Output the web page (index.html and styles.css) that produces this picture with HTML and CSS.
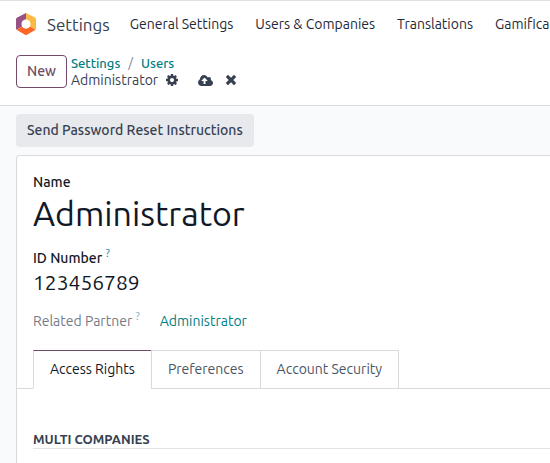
FILE: index.html
```html
<!DOCTYPE html>
<html lang="en">
<head>
<meta charset="utf-8">
<title>Settings - Administrator</title>
<link rel="stylesheet" href="styles.css">
</head>
<body>
<header class="navbar">
  <a class="brand" href="#">
    <svg class="brand-logo" viewBox="0 0 20 22" aria-hidden="true">
      <path fill="#985184" d="M10 0 1.200 4.600Q0 5.300 0 6.500V15.500Q0 16.200.5 16.800L6 13.500V8.700L10 6.500Z"/>
      <path fill="#fbb945" d="M10 0 18.800 4.600Q20 5.300 20 6.500V15.500Q20 16.200 19.500 16.800L14 13.500V8.700L10 6.500Z"/>
      <path fill="#fc6626" d="M.5 16.800 6 13.500 10 15.500 14 13.500 19.500 16.800 11 21.700Q10 22.300 9 21.700Z"/>
      <circle cx="10" cy="11" r="4.500" fill="#fff"/>
    </svg>
    <span class="brand-name">Settings</span>
  </a>
  <nav class="menu">
    <a href="#">General Settings</a>
    <a href="#">Users &amp; Companies</a>
    <a href="#">Translations</a>
    <a href="#">Gamification</a>
  </nav>
</header>
<div class="control-panel">
  <button class="btn btn-new" type="button">New</button>
  <div class="crumbs">
    <div class="crumb-path"><a href="#">Settings</a><span class="slash">/</span><a href="#">Users</a></div>
    <div class="crumb-current">
      <span>Administrator</span>
      <button class="icon-btn" type="button" aria-label="Actions">
        <svg class="icon" viewBox="128 128 1536 1536"><path d="M1152 896q0-106-75-181t-181-75-181 75-75 181 75 181 181 75 181-75 75-181zm512-109v222q0 12-8 23t-20 13l-185 28q-19 54-39 91 35 50 107 138 10 12 10 25t-9 23q-27 37-99 108t-94 71q-12 0-26-9l-138-108q-44 23-91 38-16 136-29 186-7 28-36 28h-222q-14 0-24.500-8.500t-11.500-21.500l-28-184q-49-16-90-37l-141 107q-10 9-25 9-14 0-25-11-126-114-165-168-7-10-7-23 0-12 8-23 15-21 51-66.500t54-70.500q-27-50-41-99l-183-27q-13-2-21-12.500t-8-23.500v-222q0-12 8-23t19-13l186-28q14-46 39-92-40-57-107-138-10-12-10-24 0-10 9-23 26-36 98.500-107.500t94.500-71.500q13 0 26 10l138 107q44-23 91-38 16-136 29-186 7-28 36-28h222q14 0 24.500 8.500t11.500 21.500l28 184q49 16 90 37l142-107q9-9 24-9 13 0 25 10 129 119 165 170 7 8 7 22 0 12-8 23-15 21-51 66.500t-54 70.500q26 50 41 98l183 28q13 2 21 12.500t8 23.500z"/></svg>
      </button>
      <span class="record-actions">
        <button class="icon-btn" type="button" aria-label="Save">
          <svg class="icon icon-cloud" viewBox="0 128 1920 1408"><path fill-rule="evenodd" d="M1216 864q0-14-9-23l-352-352q-9-9-23-9t-23 9l-351 351q-10 12-10 24 0 14 9 23t23 9h224v352q0 13 9.500 22.500t22.500 9.500h192q13 0 22.500-9.500t9.500-22.500v-352h224q13 0 22.500-9.500t9.500-22.500zM1920 1152q0 159-112.500 271.500t-271.500 112.500h-1088q-185 0-316.500-131.500t-131.500-316.500q0-130 70-240t188-165q-2-30-2-43 0-212 150-362t362-150q156 0 285.500 87t188.500 231q71-62 166-62 106 0 181 75t75 181q0 76-41 138 130 31 213.500 135.500t83.500 238.500z"/></svg>
        </button>
        <button class="icon-btn" type="button" aria-label="Discard">
          <svg class="icon icon-times" viewBox="302 366 1188 1188"><path d="M1490 1322q0 40-28 68l-136 136q-28 28-68 28t-68-28l-294-294-294 294q-28 28-68 28t-68-28l-136-136q-28-28-28-68t28-68l294-294-294-294q-28-28-28-68t28-68l136-136q28-28 68-28t68 28l294 294 294-294q28-28 68-28t68 28l136 136q28 28 28 68t-28 68l-294 294 294 294q28 28 28 68z"/></svg>
        </button>
      </span>
    </div>
  </div>
</div>
<main class="content">
  <button class="btn btn-reset" type="button">Send Password Reset Instructions</button>
  <section class="sheet">
    <form class="fields">
      <label class="label" for="name">Name</label>
      <input class="value value-name" id="name" type="text" value="Administrator">
      <label class="label" for="id-number">ID Number <sup class="help">?</sup></label>
      <input class="value value-id" id="id-number" type="text" value="123456789">
      <div class="partner">
        <span class="partner-label">Related Partner <sup class="help">?</sup></span>
        <a href="#">Administrator</a>
      </div>
    </form>
    <div class="tabs" role="tablist">
      <button class="tab tab-active" type="button" role="tab" aria-selected="true">Access Rights</button>
      <button class="tab" type="button" role="tab" aria-selected="false">Preferences</button>
      <button class="tab" type="button" role="tab" aria-selected="false">Account Security</button>
    </div>
    <div class="panel" role="tabpanel">
      <h2 class="section-title">Multi Companies</h2>
    </div>
  </section>
</main>
</body>
</html>
```
FILE: styles.css
```css
* { box-sizing: border-box; }

body {
  display: flex;
  flex-direction: column;
  min-height: 100vh;
  margin: 0;
  background: #f9fafb;
  color: #374151;
  font-family: Ubuntu, "Noto Sans", sans-serif;
  font-size: 14px;
  line-height: 20px;
}

a { color: #017e84; text-decoration: none; }
button, input { font: inherit; color: inherit; }

.navbar {
  display: flex;
  align-items: center;
  height: 47px;
  padding-left: 16px;
  gap: 20px;
  border-top: 1px solid #dee0e3;
  background: #fff;
  white-space: nowrap;
  overflow: hidden;
}
.brand { display: flex; align-items: center; gap: 11px; color: #374151; }
.brand-logo { width: 20px; height: 22px; }
.brand-name { padding-top: 2px; font-size: 17px; }
.menu { display: flex; gap: 22px; }
.menu a { color: #1f2937; }

.control-panel {
  display: flex;
  align-items: center;
  height: 59px;
  padding: 0 16px 10px;
  gap: 4px;
  border-bottom: 1px solid #d8dadd;
  background: #fff;
}
.btn {
  height: 33px;
  padding: 0 10px;
  border: 1px solid transparent;
  border-radius: 4px;
  font-weight: 500;
}
.btn-new { border-color: #714b67; background: #fff; color: #714b67; }
.btn-reset { display: block; padding-bottom: 2px; background: #e7e9ed; color: #374151; }

.crumbs { padding-top: 1px; line-height: 17px; }
.crumb-path { font-size: 13px; font-weight: 500; }
.slash { margin: 0 8px; color: #7c8290; font-weight: 400; }
.crumb-current { display: flex; align-items: center; gap: 8px; }
.record-actions { display: flex; gap: 13px; margin-left: 12px; }
.icon-btn { display: flex; padding: 0; border: 0; background: none; }
.icon { width: 12px; height: 12px; fill: #374151; }
.icon-cloud { width: 15px; height: 11px; }
.icon-times { width: 10px; height: 10px; align-self: center; }

.content { display: flex; flex: 1; flex-direction: column; align-items: flex-start; padding: 8px 0 0 16px; }
.sheet {
  flex: 1;
  align-self: stretch;
  margin-top: 8px;
  border: 1px solid #d8dadd;
  border-right: 0;
  border-bottom: 0;
  border-radius: 4px 0 0 0;
  background: #fff;
}
.fields { display: flex; flex-direction: column; padding: 16px 16px 0; color: #111827; }
.label { font-weight: 500; }
.value { width: 100%; padding: 0; border: 0; background: none; outline: 0; }
.value-name { height: 42px; margin-bottom: 14px; font-size: 34px; }
.value-id { height: 28px; font-size: 21px; }
.help { color: #0180a5; font-size: 11px; line-height: 0; font-weight: 400; }
.partner { display: flex; gap: 20px; margin-top: 15px; }
.partner-label { color: #747a86; }
.partner .help { opacity: .6; }

.tabs {
  display: flex;
  margin-top: 19px;
  padding-left: 16px;
  border-bottom: 1px solid #d8dadd;
}
.tab {
  height: 39px;
  margin: 0 0 -1px -1px;
  padding: 0 16px 2px;
  border: 1px solid #d8dadd;
  background: #fff;
  color: #4b5563;
}
.tab-active {
  margin-left: 0;
  border-top-color: #714b67;
  border-bottom-color: #fff;
  color: #111827;
}
.panel { padding: 41px 0 0 16px; }
.section-title {
  margin: 0;
  border-bottom: 1px solid #e2e4e7;
  font-size: 13px;
  line-height: 18px;
  font-weight: 700;
  text-transform: uppercase;
}
```
